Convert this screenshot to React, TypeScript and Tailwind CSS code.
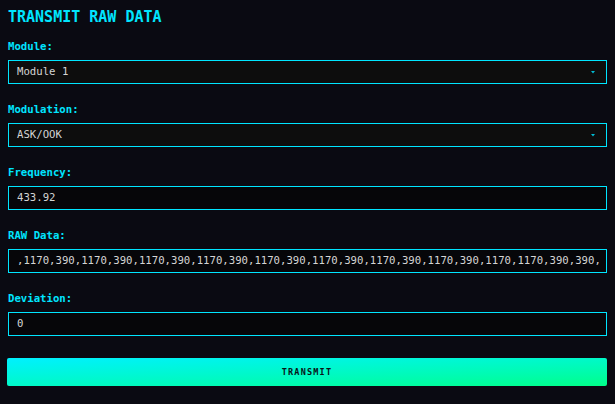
import React from "react";

const mono = "font-['DejaVu_Sans_Mono',monospace]";

const Arrow = () => (
  <svg width="4" height="3" viewBox="0 0 4 3" className="shrink-0">
    <polygon points="0,0 4,0 2,2.5" fill="#00bcd4" />
  </svg>
);

const Label = ({ children }: { children: React.ReactNode }) => (
  <label className="block text-[10.67px] leading-[14px] font-bold text-[#00e5ff] mb-[6px]">
    {children}
  </label>
);

const SelectBox = ({ value }: { value: string }) => (
  <div className="h-6 border border-[#00e5ff] bg-[#0d0d0d] flex items-center justify-between pl-2 pr-[11px]">
    <span className="text-[10.67px] text-[#d4d4d4]">{value}</span>
    <Arrow />
  </div>
);

const InputBox = ({ value, end }: { value: string; end?: boolean }) => (
  <div className="h-6 border border-[#00e5ff] bg-[#060609] flex items-center pl-2 pr-[6px]">
    <div
      className={`flex-1 whitespace-nowrap flex ${
        end ? "justify-end" : "justify-start"
      }`}
    >
      <span className="text-[10.67px] text-[#d4d4d4]">{value}</span>
    </div>
  </div>
);

// only the visible tail of the scrolled field
const rawData =
  ",1170,390,1170,390,1170,390,1170,390,1170,390,1170,390,1170,390,1170,390,1170,1170,390,390,";

export default function App() {
  return (
    <div className={`min-h-screen w-full bg-[#0a0a12] p-2 ${mono}`}>
      <h1 className="text-[15px] leading-[18px] font-bold text-[#00e5ff] mb-[14px]">
        TRANSMIT RAW DATA
      </h1>

      <div className="flex flex-col gap-[19px]">
        <div>
          <Label>Module:</Label>
          <SelectBox value="Module 1" />
        </div>
        <div>
          <Label>Modulation:</Label>
          <SelectBox value="ASK/OOK" />
        </div>
        <div>
          <Label>Frequency:</Label>
          <InputBox value="433.92" />
        </div>
        <div>
          <Label>RAW Data:</Label>
          <InputBox value={rawData} end />
        </div>
        <div>
          <Label>Deviation:</Label>
          <InputBox value="0" />
        </div>
      </div>

      <button className="mt-[22px] -ml-px w-[600px] h-7 rounded-[2px] bg-linear-to-br from-[#00f0ff] to-[#00ff88] flex items-center justify-center">
        <span className="text-[8.5px] font-bold tracking-[1.2px] text-[#0a1418]">
          TRANSMIT
        </span>
      </button>
    </div>
  );
}
